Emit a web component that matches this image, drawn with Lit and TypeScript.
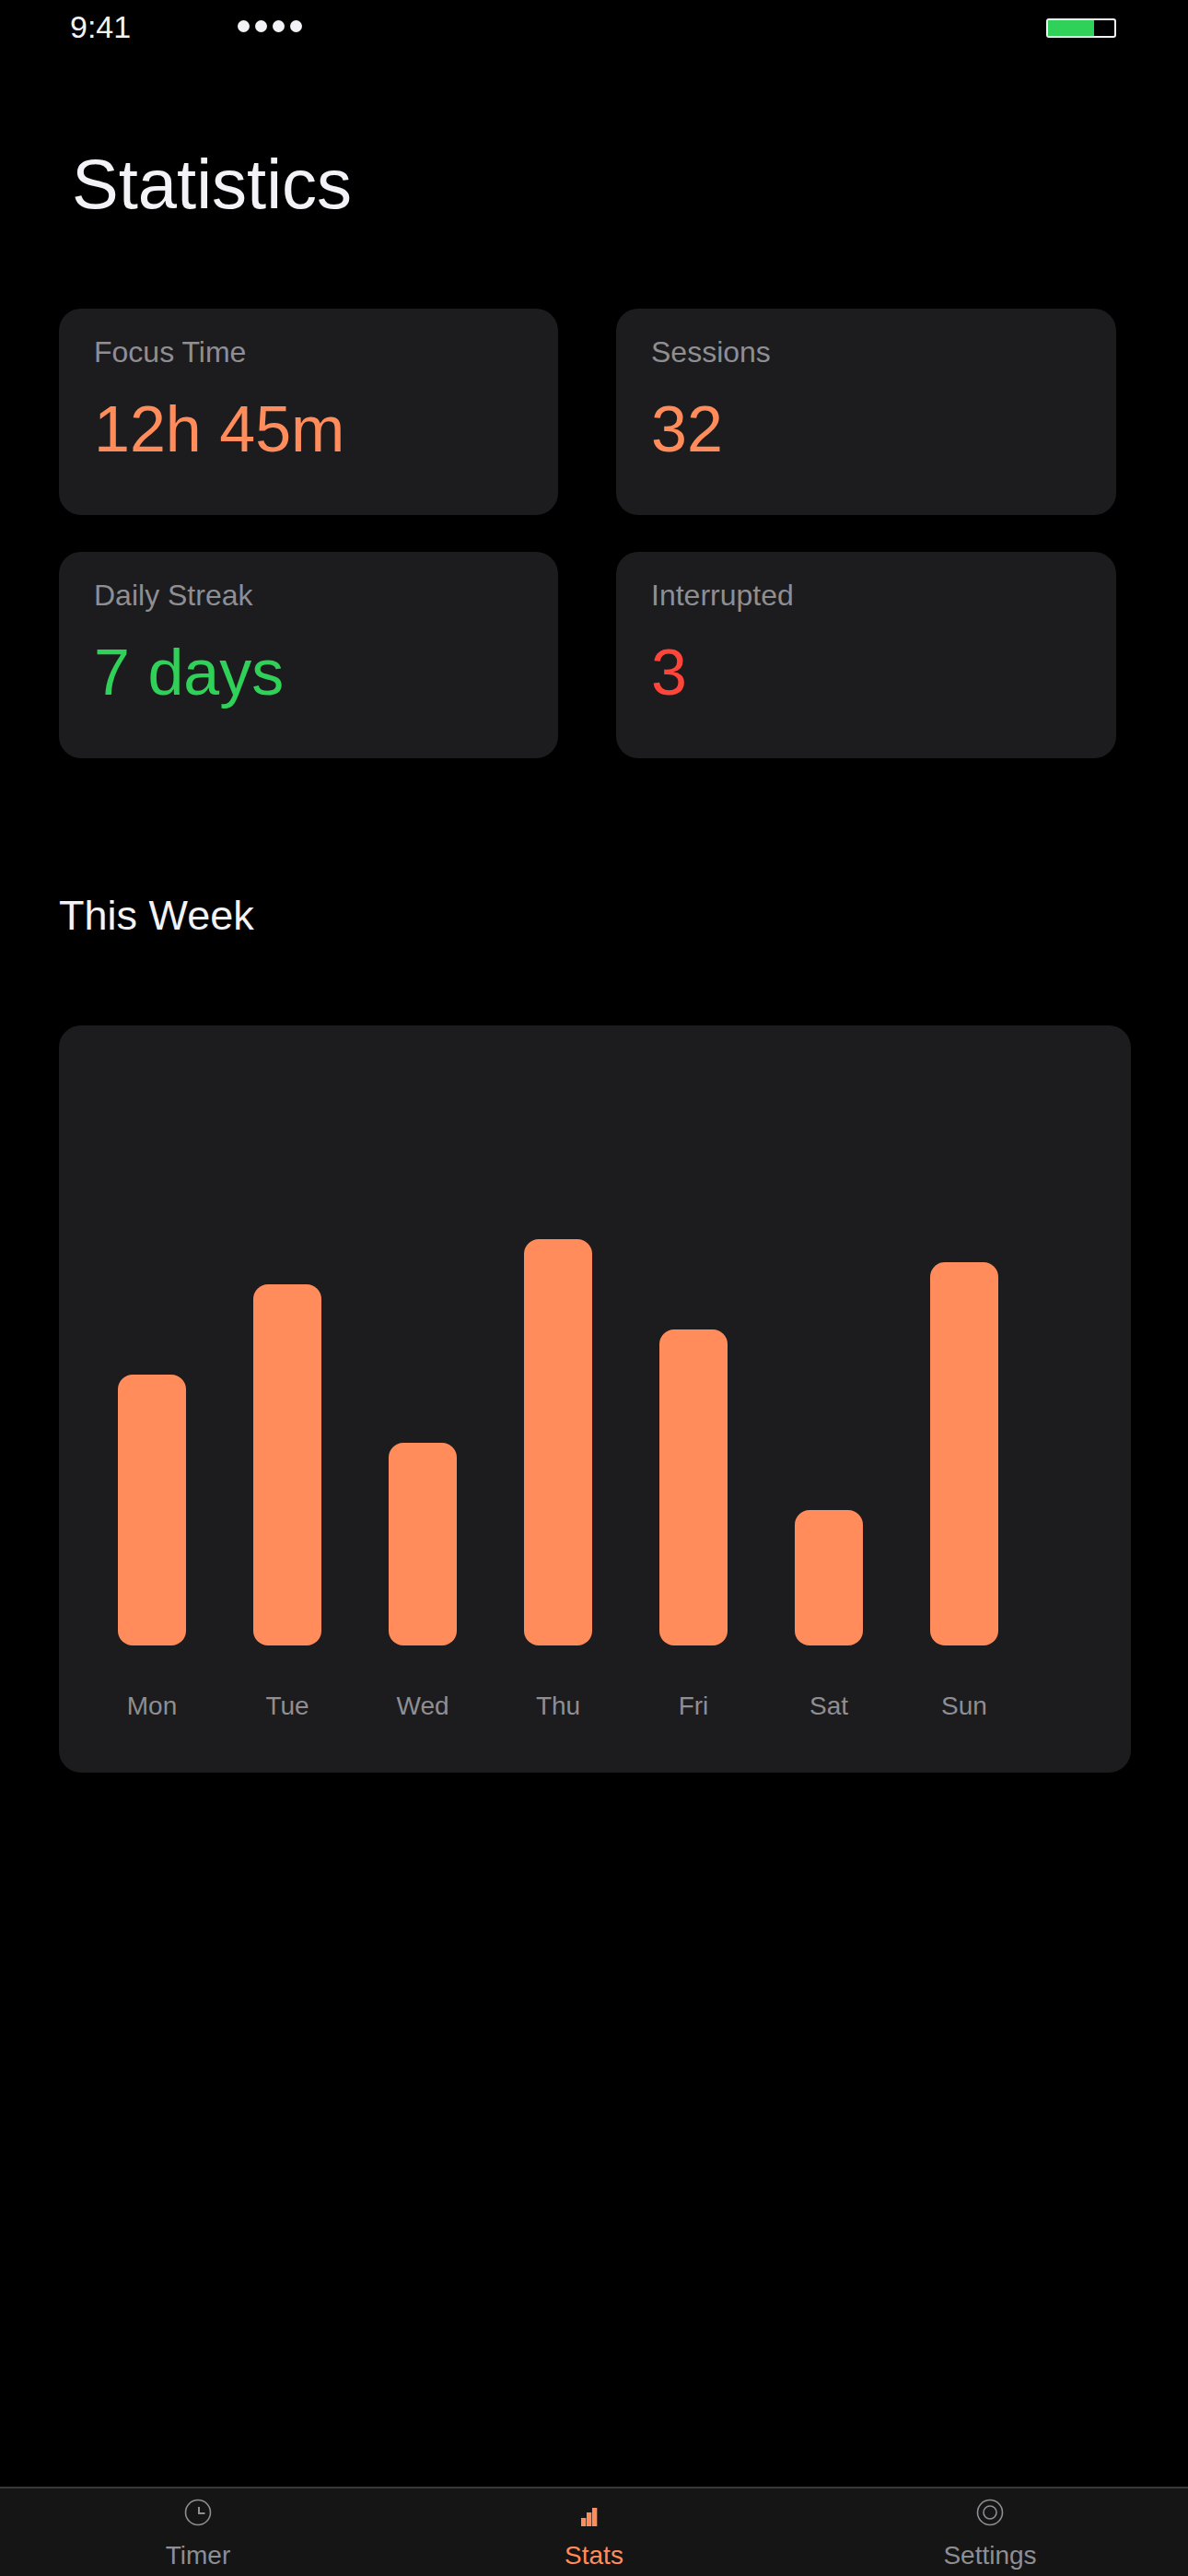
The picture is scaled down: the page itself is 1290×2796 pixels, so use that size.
import { LitElement, css, html, svg } from 'lit'
import { customElement } from 'lit/decorators.js'

interface Stat {
  label: string
  value: string
  tone: string
}

const STATS: Stat[] = [
  { label: 'Focus Time', value: '12h 45m', tone: 'orange' },
  { label: 'Sessions', value: '32', tone: 'orange' },
  { label: 'Daily Streak', value: '7 days', tone: 'green' },
  { label: 'Interrupted', value: '3', tone: 'red' },
]

// bar heights as percent of the 490px plot
const WEEK = [
  { day: 'Mon', pct: 60 },
  { day: 'Tue', pct: 80 },
  { day: 'Wed', pct: 45 },
  { day: 'Thu', pct: 90 },
  { day: 'Fri', pct: 70 },
  { day: 'Sat', pct: 30 },
  { day: 'Sun', pct: 85 },
]

const clockIcon = svg`<circle cx="16" cy="16" r="13.5" /><path stroke-width="2" d="M17 10v7h6.5" />`
const barsIcon = svg`
  <rect x="2" y="22" width="5.33" height="9" />
  <rect x="8" y="16" width="5.33" height="15" />
  <rect x="14" y="11" width="5.33" height="20" />
`
const ringIcon = svg`<circle cx="16" cy="16" r="13.5" /><circle cx="16" cy="16" r="7" />`

@customElement('app-root')
export class AppRoot extends LitElement {
  static styles = css`
    :host {
      display: block;
      width: 1290px;
      height: 2796px;
      background: #000;
      color: #f2f2f7;
      font-family: 'Liberation Sans', sans-serif;
    }

    .screen {
      display: flex;
      flex-direction: column;
      height: 100%;
    }

    .status {
      display: flex;
      align-items: center;
      height: 61px;
      padding: 0 78px 0 76px;
      font-size: 34px;
    }

    .time {
      width: 66px;
      margin-top: -2px;
      white-space: nowrap;
    }

    .dots {
      display: flex;
      gap: 6px;
      margin: -4px auto 0 116px;
    }

    .dots i {
      width: 13px;
      height: 13px;
      border-radius: 50%;
      background: #f2f2f7;
    }

    .battery {
      width: 76px;
      height: 21px;
      box-sizing: border-box;
      border: 2px solid #f2f2f7;
      border-radius: 3px;
    }

    .battery div {
      width: 70%;
      height: 100%;
      background: #30d158;
    }

    h1 {
      margin: 91px 0 0 78px;
      font-size: 76px;
      font-weight: 400;
      line-height: 96px;
    }

    .stats {
      display: grid;
      grid-template-columns: 542px 543px;
      gap: 40px 63px;
      margin: 87px 0 0 64px;
    }

    .card {
      height: 224px;
      box-sizing: border-box;
      padding: 27px 38px;
      border-radius: 24px;
      background: #1c1c1e;
    }

    .card .label {
      font-size: 32px;
      line-height: 40px;
      color: #8e8e93;
    }

    .card .value {
      margin-top: 22px;
      font-size: 70px;
      line-height: 84px;
    }

    .orange { color: #ff8c5a; }
    .green { color: #30d158; }
    .red { color: #ff453a; }

    h2 {
      margin: 141px 0 0 64px;
      font-size: 45px;
      font-weight: 400;
      line-height: 60px;
    }

    .chart {
      margin: 89px 0 0 64px;
      width: 1164px;
      height: 811px;
      box-sizing: border-box;
      padding: 0 64px 55px;
      border-radius: 24px;
      background: #1c1c1e;
      display: flex;
      gap: 73px;
      align-items: flex-end;
    }

    .col {
      width: 74px;
      display: flex;
      flex-direction: column;
      align-items: center;
    }

    .bar {
      width: 74px;
      border-radius: 16px;
      background: #ff8c5a;
    }

    .day {
      margin-top: 49px;
      font-size: 28px;
      line-height: 34px;
      color: #8e8e93;
    }

    .tabs {
      margin-top: auto;
      height: 97px;
      box-sizing: border-box;
      border-top: 2px solid #38383a;
      background: #151515;
      display: grid;
      grid-template-columns: repeat(3, 1fr);
    }

    .tab {
      display: flex;
      flex-direction: column;
      align-items: center;
      padding-top: 10px;
      font-size: 28px;
      line-height: 34px;
      color: #8e8e93;
    }

    .tab svg {
      width: 32px;
      height: 32px;
      margin-bottom: 14px;
      fill: none;
      stroke: currentColor;
      stroke-width: 1.6;
    }

    .tab.active {
      color: #ff8c5a;
    }

    .tab.active svg {
      fill: currentColor;
      stroke: none;
    }
  `

  render() {
    return html`
      <div class="screen">
        <div class="status">
          <span class="time">9:41</span>
          <div class="dots"><i></i><i></i><i></i><i></i></div>
          <div class="battery"><div></div></div>
        </div>

        <h1>Statistics</h1>

        <div class="stats">
          ${STATS.map(
            (s) => html`
              <div class="card">
                <div class="label">${s.label}</div>
                <div class="value ${s.tone}">${s.value}</div>
              </div>
            `
          )}
        </div>

        <h2>This Week</h2>

        <div class="chart">
          ${WEEK.map(
            (d) => html`
              <div class="col">
                <div class="bar" style="height:${(d.pct / 100) * 490}px"></div>
                <div class="day">${d.day}</div>
              </div>
            `
          )}
        </div>

        <nav class="tabs">
          <div class="tab">
            <svg viewBox="0 0 32 32">${clockIcon}</svg>
            Timer
          </div>
          <div class="tab active">
            <svg viewBox="0 0 32 32">${barsIcon}</svg>
            Stats
          </div>
          <div class="tab">
            <svg viewBox="0 0 32 32">${ringIcon}</svg>
            Settings
          </div>
        </nav>
      </div>
    `
  }
}
